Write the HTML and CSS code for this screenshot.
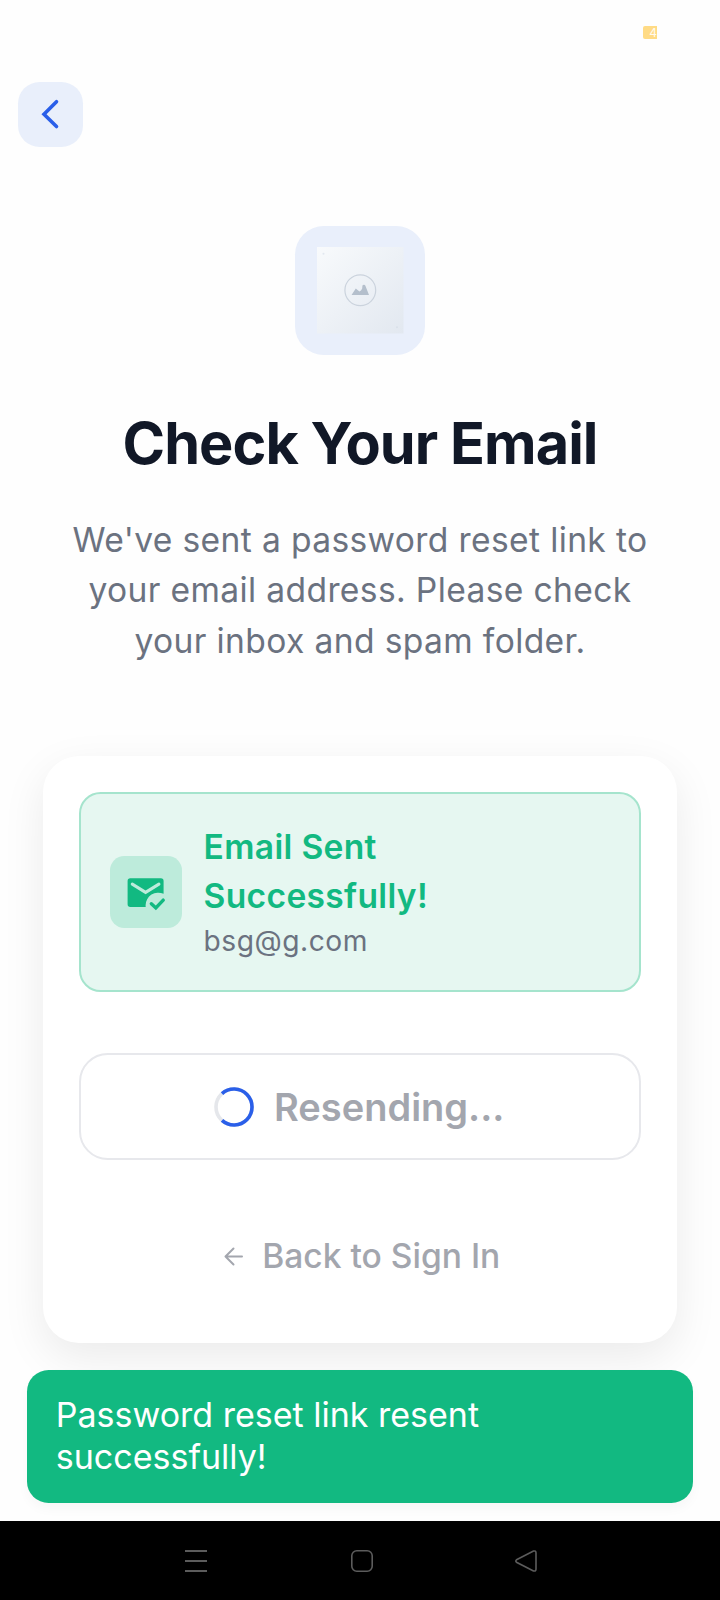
FILE: index.html
```
<!DOCTYPE html>
<html lang="en">
<head>
<meta charset="utf-8">
<title>Check Your Email</title>
<link rel="stylesheet" href="styles.css">
</head>
<body>
<div class="screen">
  <div class="status-bar"><span class="battery">4</span></div>
  <header class="top">
    <button class="back" aria-label="Back">
      <svg width="65" height="65" viewBox="0 0 65 65"><path d="M38.500 19.700 26 32.200l12.500 12.300" fill="none" stroke="#2a5fe9" stroke-width="3.600" stroke-linecap="round" stroke-linejoin="miter"/></svg>
    </button>
  </header>
  <main class="content">
    <div class="logo">
      <svg width="87" height="87" viewBox="0 0 87 87">
        <defs><linearGradient id="tile" x1="0" y1="0" x2="1" y2="1"><stop offset="0" stop-color="#f8fafc"/><stop offset="1" stop-color="#e2e8f0"/></linearGradient></defs>
        <rect width="86.500" height="86.500" fill="url(#tile)"/>
        <circle cx="43.300" cy="43.300" r="15.400" fill="none" stroke="#cbd3dd" stroke-width="1.200"/>
        <path d="M34.500 48l4.300-6.600 3.600 3.200q1.800-1 2.800-3.200l.2-2.600a1.700 1.700 0 0 1 3.200.4L52 48z" fill="#b4bfcc"/>
        <circle cx="6.500" cy="6.800" r="1" fill="#e2e8f0"/><circle cx="80" cy="80.200" r="1" fill="#d9e0e9"/>
      </svg>
    </div>
    <h1 class="title">Check Your Email</h1>
    <p class="lead">We've sent a password reset link to<br>your email address. Please check<br>your inbox and spam folder.</p>
    <section class="card">
      <div class="notice">
        <div class="notice-icon">
          <svg width="43.200" height="43.200" viewBox="0 0 24 24">
            <path d="M3.500 4h17A1.500 1.500 0 0 1 22 5.500v7.200A7 7 0 0 0 12 19c0 .34.030.670.080 1H3.500A1.500 1.500 0 0 1 2 18.500v-13A1.500 1.500 0 0 1 3.500 4z" fill="#12b981"/>
            <path d="M4.600 7.300 12 11.900l7.400-4.600" fill="none" stroke="#bdebdb" stroke-width="1.700" stroke-linecap="round"/>
            <path d="M15.200 18.200l2.500 2.300 4.100-4.300" fill="none" stroke="#12b981" stroke-width="1.900" stroke-linecap="round"/>
          </svg>
        </div>
        <div class="notice-text">
          <div class="notice-title">Email Sent<br>Successfully!</div>
          <div class="notice-mail">bsg@g.com</div>
        </div>
      </div>
      <button class="resend">
        <svg width="40" height="40" viewBox="0 0 40 40" fill="none" stroke-width="3.600">
          <circle cx="20" cy="20" r="18" stroke="#e5e7eb"/>
          <path d="M8 6.600A18 18 0 1 1 8 33.400" stroke="#2a5fe9"/>
        </svg>
        <span>Resending...</span>
      </button>
      <a class="signin">
        <svg width="19" height="19" viewBox="0 0 19 19" fill="none" stroke="#a3a6ae" stroke-width="2" stroke-linecap="round" stroke-linejoin="round"><path d="M18 9.500H1.500M9.500 1.500l-8 8 8 8"/></svg>
        <span>Back to Sign In</span>
      </a>
    </section>
  </main>
  <div class="toast">Password reset link resent<br>successfully!</div>
  <nav class="system-nav">
    <svg width="22" height="22" viewBox="0 0 22 22" stroke="#5c5c5c" stroke-width="2"><path d="M0 1h22M0 11h22M0 21h22"/></svg>
    <svg width="22" height="22" viewBox="0 0 22 22" fill="none" stroke="#5c5c5c" stroke-width="1.600"><rect x=".8" y=".8" width="20.400" height="20.400" rx="5"/></svg>
    <svg width="22" height="22" viewBox="0 0 22 22" fill="none" stroke="#5c5c5c" stroke-width="1.600"><path d="M1.500 9.700 18.500 1.100Q21 .4 21 3V19Q21 21.600 18.500 20.900L1.500 12.300Q.2 11 1.500 9.700z"/></svg>
  </nav>
</div>
</body>
</html>
```
FILE: styles.css
```
* { box-sizing: border-box; }
body {
  margin: 0;
  background: #fefefe;
  font-family: Inter, "Liberation Sans", sans-serif;
}
button { padding: 0; font: inherit; }
svg { display: block; flex: none; }
.screen {
  height: 1600px;
  display: flex;
  flex-direction: column;
  overflow: hidden;
}
.status-bar {
  height: 82px;
  flex: none;
  padding: 26px 0 0 643px;
}
.battery {
  display: block;
  width: 14px;
  height: 13px;
  border-radius: 2px 0 0 2px;
  background: #ffdb85;
  color: #fffaf0;
  font-size: 12px;
  line-height: 13px;
  text-align: right;
}
.top { padding-left: 18px; flex: none; }
.back {
  display: block;
  width: 65px;
  height: 64.800px;
  border: 0;
  border-radius: 21.600px;
  background: #e9effb;
}
.content {
  flex: none;
  display: flex;
  flex-direction: column;
  align-items: center;
  padding: 78.900px 43.200px 0;
}
.logo {
  width: 130px;
  height: 129.600px;
  display: grid;
  place-items: center;
  border-radius: 28.800px;
  background: #e9effb;
}
.title {
  margin: 53px 0 0;
  color: #111827;
  font-size: 57.600px;
  font-weight: 700;
  line-height: 70px;
  letter-spacing: -.93px;
  white-space: nowrap;
}
.lead {
  margin: 36.400px 0 0;
  color: #6b7280;
  font-size: 33.600px;
  font-weight: 400;
  line-height: 50.600px;
  letter-spacing: .37px;
  text-align: center;
  white-space: nowrap;
}
.card {
  width: 100%;
  height: 586.500px;
  margin-top: 89.900px;
  padding: 36px;
  border-radius: 36px;
  background: #fff;
  box-shadow: 0 14.400px 43.200px rgba(0, 0, 0, .08);
}
.notice {
  height: 199.500px;
  display: flex;
  align-items: center;
  gap: 21.600px;
  padding: 0 28.800px;
  border: 2px solid #a5e4cd;
  border-radius: 21.600px;
  background: #e6f7f1;
}
.notice-icon {
  width: 72px;
  height: 72px;
  display: grid;
  place-items: center;
  border-radius: 14.400px;
  background: #bdebdb;
}
.notice-title {
  margin-top: -1px;
  color: #12b981;
  font-size: 33.600px;
  font-weight: 600;
  line-height: 49px;
  letter-spacing: .32px;
}
.notice-mail {
  margin-bottom: -1px;
  color: #6b7280;
  font-size: 28.200px;
  line-height: 42px;
  letter-spacing: .5px;
}
.resend {
  width: 100%;
  height: 106.500px;
  display: flex;
  align-items: center;
  justify-content: center;
  gap: 20px;
  margin-top: 61.300px;
  padding: 1.500px 1.500px 0 0;
  border: 2px solid #e7e8ec;
  border-radius: 28.800px;
  background: #fff;
  color: #a3a6ae;
  font-size: 38px;
  font-weight: 600;
}
.signin {
  display: flex;
  align-items: center;
  justify-content: center;
  gap: 19.500px;
  margin: 71.500px -4px 0 0;
  color: #a3a6ae;
  font-size: 33.600px;
  font-weight: 500;
  line-height: 50px;
}
.toast {
  height: 133.200px;
  flex: none;
  margin: 26.800px 27px 18px;
  padding: 24.500px 28.800px;
  border-radius: 21.600px;
  background: #12b981;
  box-shadow: 0 6px 12px rgba(0, 0, 0, .03);
  color: #fff;
  font-size: 34px;
  line-height: 42px;
  position: relative;
}
.system-nav {
  flex: 1;
  display: flex;
  gap: 144px;
  padding: 29px 0 0 185px;
  background: #000;
  position: relative;
}
.system-nav svg:last-child { margin-left: -2px; }
```
